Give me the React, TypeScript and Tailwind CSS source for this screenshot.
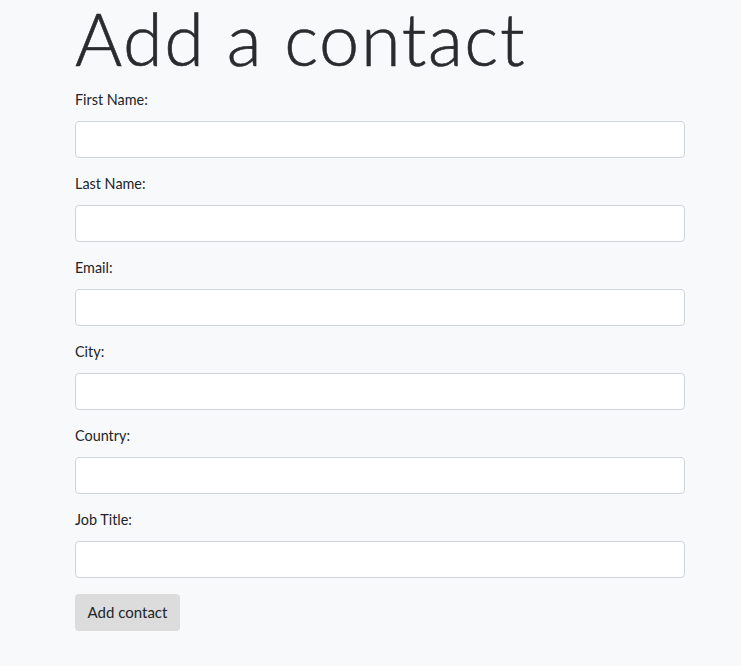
const fields = ['First Name', 'Last Name', 'Email', 'City', 'Country', 'Job Title'];

export default function App() {
  return (
    <div className="min-h-[666px] bg-[#f8f9fa] pt-[2px] font-['Lato','Liberation_Sans',sans-serif] text-[#212529]">
      <div className="w-[610px] ml-[75px]">
        <h1 className="text-[72px] leading-[72px] font-light tracking-[1.6px] text-[#2a2b2e] [-webkit-text-stroke:0.6px_#2a2b2e]">
          Add a contact
        </h1>
        <form className="mt-[15px]" onSubmit={(e) => e.preventDefault()}>
          {fields.map((name) => (
            <div key={name} className="mb-[15px]">
              <label className="block text-[14.4px] leading-[21px] mb-[11px]">
                {name}:
              </label>
              <input
                type="text"
                className="block w-full h-[37px] bg-white border border-[#ced4da] rounded-[4px] px-3"
              />
            </div>
          ))}
          <button
            type="submit"
            className="mt-px h-[37px] w-[105px] bg-[#dcdcdc] rounded-[4px] text-[15px] text-[#212529]"
          >
            Add contact
          </button>
        </form>
      </div>
    </div>
  );
}
